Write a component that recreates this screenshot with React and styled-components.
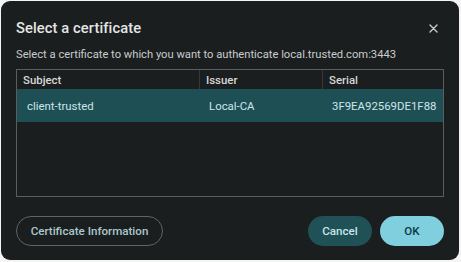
import React from 'react';
import styled, { createGlobalStyle } from 'styled-components';

const GlobalStyle = createGlobalStyle`
  html, body {
    margin: 0;
    padding: 0;
    background: #f4f4f4;
  }
  body {
    font-family: Roboto, "Noto Sans", sans-serif;
  }
`;

const Page = styled.div`
  width: 461px;
  height: 262px;
  padding: 1px 2px 2px 1px;
  box-sizing: border-box;
`;

const Dialog = styled.div`
  height: 100%;
  background: #1b1e1f;
  border-radius: 9px;
  padding: 16px 15px 14px 15px;
  box-sizing: border-box;
  display: flex;
  flex-direction: column;
  color: #e3e3e3;
`;

const Header = styled.div`
  display: flex;
  align-items: center;
  justify-content: space-between;
  height: 22px;
`;

const Title = styled.h1`
  margin: 0;
  font-size: 14.7px;
  font-weight: 500;
  color: #e4e5e5;
  letter-spacing: 0.1px;
`;

const CloseButton = styled.button`
  background: none;
  border: none;
  padding: 0;
  margin-right: 4px;
  width: 14px;
  height: 14px;
  display: flex;
  align-items: center;
  justify-content: center;
  color: #c8cbcb;
`;

const Subtitle = styled.p`
  margin: 9px 0 0;
  font-size: 11.2px;
  color: #c9cccc;
`;

const TableBox = styled.div`
  margin-top: 8px;
  height: 126px;
  border: 1px solid #5a5e5f;
  display: flex;
  flex-direction: column;
`;

const Row = styled.div`
  display: grid;
  grid-template-columns: 182px 123px 1fr;
  height: ${({ $head }) => ($head ? '19px' : '33px')};
  background: ${({ $selected }) => ($selected ? '#1e4f55' : '#1b1e1f')};
  color: ${({ $selected }) => ($selected ? '#cde5e8' : '#d6d8d8')};
  font-size: 11.4px;
  align-items: center;
`;

const Cell = styled.div`
  padding-left: ${({ $head }) => ($head ? '6px' : '10px')};
  height: 100%;
  display: flex;
  align-items: center;
  border-left: ${({ $head, $first }) => ($head && !$first ? '1px solid #34383a' : 'none')};
  font-weight: ${({ $head }) => ($head ? 500 : 400)};
`;

const Footer = styled.div`
  margin-top: auto;
  display: flex;
  align-items: center;
  justify-content: space-between;
`;

const Actions = styled.div`
  display: flex;
  gap: 8px;
`;

const Button = styled.button`
  height: 30px;
  border-radius: 15px;
  font-family: Roboto, "Noto Sans", sans-serif;
  font-size: 11.6px;
  font-weight: 500;
  padding: 0 ${({ $wide }) => ($wide ? '13px' : '0')};
  width: ${({ $wide }) => ($wide ? '147px' : '64px')};
  border: ${({ $variant }) => ($variant === 'outline' ? '1px solid #5f6465' : 'none')};
  background: ${({ $variant }) =>
    $variant === 'primary' ? '#7fcfdf' : $variant === 'tonal' ? '#1f5157' : 'transparent'};
  color: ${({ $variant }) =>
    $variant === 'primary' ? '#0d3a40' : $variant === 'tonal' ? '#c7e6ea' : '#a9c8cd'};
`;

const rows = [{ subject: 'client-trusted', issuer: 'Local-CA', serial: '3F9EA92569DE1F88' }];

export default function App() {
  return (
    <>
      <GlobalStyle />
      <Page>
        <Dialog>
          <Header>
            <Title>Select a certificate</Title>
            <CloseButton aria-label="Close">
              <svg width="9" height="9" viewBox="0 0 9 9">
                <path d="M1 1L8 8M8 1L1 8" stroke="currentColor" strokeWidth="1.4" strokeLinecap="round" />
              </svg>
            </CloseButton>
          </Header>
          <Subtitle>Select a certificate to which you want to authenticate local.trusted.com:3443</Subtitle>
          <TableBox>
            <Row $head>
              <Cell $head $first>Subject</Cell>
              <Cell $head>Issuer</Cell>
              <Cell $head>Serial</Cell>
            </Row>
            {rows.map((r) => (
              <Row key={r.serial} $selected>
                <Cell>{r.subject}</Cell>
                <Cell>{r.issuer}</Cell>
                <Cell>{r.serial}</Cell>
              </Row>
            ))}
          </TableBox>
          <Footer>
            <Button $variant="outline" $wide>Certificate Information</Button>
            <Actions>
              <Button $variant="tonal">Cancel</Button>
              <Button $variant="primary">OK</Button>
            </Actions>
          </Footer>
        </Dialog>
      </Page>
    </>
  );
}
